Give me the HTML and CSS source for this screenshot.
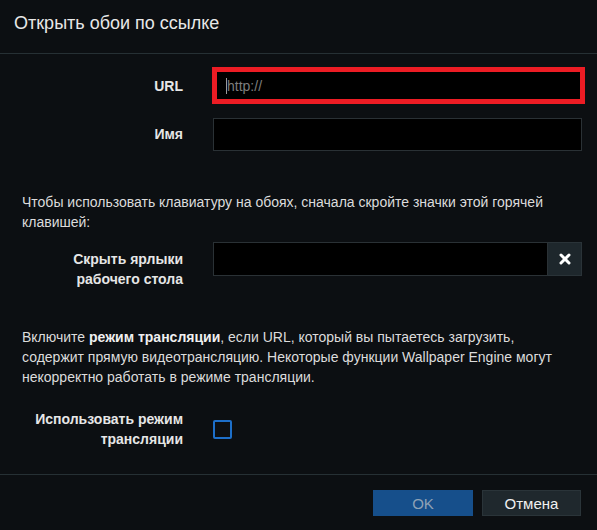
FILE: index.html
```html
<!DOCTYPE html>
<html lang="ru">
<head>
<meta charset="utf-8">
<title>Открыть обои по ссылке</title>
<link rel="stylesheet" href="styles.css">
</head>
<body>
<div class="dialog">
  <div class="header">Открыть обои по ссылке</div>
  <div class="body">
    <div class="row row-url">
      <label class="label">URL</label>
      <div class="input input-url"><span class="caret"></span><span class="placeholder">http://</span></div>
    </div>
    <div class="row row-name">
      <label class="label">Имя</label>
      <div class="input"></div>
    </div>
    <p class="text text-hotkey">Чтобы использовать клавиатуру на обоях, сначала скройте значки этой горячей клавишей:</p>
    <div class="row row-hotkey">
      <label class="label label-multi">Скрыть ярлыки<br>рабочего стола</label>
      <div class="hotkey">
        <div class="input hotkey-field"></div>
        <button class="clear" type="button" aria-label="Очистить">
          <svg width="12" height="12" viewBox="0 0 12 12"><path d="M2 2 L10 10 M10 2 L2 10" stroke="#ffffff" stroke-width="3" stroke-linecap="round"/></svg>
        </button>
      </div>
    </div>
    <p class="text text-stream">Включите <b>режим трансляции</b>, если URL, который вы пытаетесь загрузить, содержит прямую видеотрансляцию. Некоторые функции Wallpaper Engine могут некорректно работать в режиме трансляции.</p>
    <div class="row row-check">
      <label class="label label-multi">Использовать режим<br>трансляции</label>
      <span class="checkbox"></span>
    </div>
  </div>
  <div class="footer">
    <button class="btn btn-ok" type="button">OK</button>
    <button class="btn btn-cancel" type="button">Отмена</button>
  </div>
</div>
</body>
</html>
```
FILE: styles.css
```css
* { box-sizing: border-box; }
html, body {
  margin: 0;
  padding: 0;
  background: #0c0f12;
}
body {
  font-family: "Liberation Sans", Arial, sans-serif;
  font-size: 14px;
  color: #dcdcdc;
}
.dialog {
  width: 597px;
  height: 530px;
  display: flex;
  flex-direction: column;
}
.header {
  height: 54px;
  padding: 12px 0 0 14px;
  font-size: 18px;
  line-height: 22px;
  color: #e8e8e8;
  border-bottom: 1px solid #263034;
}
.body {
  flex: 1;
  padding: 13px 15px 0 22px;
}
.row {
  display: grid;
  grid-template-columns: 161px 1fr;
  column-gap: 30px;
  align-items: start;
}
.label {
  font-weight: bold;
  color: #e6e6e6;
  text-align: right;
  line-height: 20px;
}
.row-url .label { padding-top: 9px; }
.row-name { margin-top: 14px; }
.row-name .label { padding-top: 6px; }
.input {
  height: 33px;
  background: #000;
  border: 1px solid #2a3135;
}
.input-url {
  height: 37px;
  border: 5px solid #ec1c24;
  margin-left: -1px;
  margin-right: -3px;
  display: flex;
  align-items: center;
  padding-left: 9px;
}
.caret {
  width: 1px;
  height: 16px;
  background: #9a9a9a;
}
.placeholder {
  color: #7d7d7d;
  font-size: 14px;
}
.text {
  margin: 0;
  padding-right: 20px;
  line-height: 20px;
  color: #dcdcdc;
}
.text b { color: #f0f0f0; }
.text-hotkey { margin-top: 41px; }
.row-hotkey { margin-top: 10px; }
.row-hotkey .label { padding-top: 7px; }
.hotkey {
  display: flex;
  height: 34px;
}
.hotkey-field {
  flex: 1;
  height: 34px;
}
.clear {
  width: 34px;
  height: 34px;
  margin: 0;
  padding: 0;
  background: #1e272c;
  border: 1px solid #2a3338;
  border-left: none;
  display: flex;
  align-items: center;
  justify-content: center;
}
.text-stream { margin-top: 38px; }
.row-check {
  margin-top: 22px;
  align-items: center;
}
.checkbox {
  width: 19px;
  height: 19px;
  border: 2px solid #1d6fc9;
  border-radius: 2px;
}
.footer {
  height: 56px;
  border-top: 1px solid #263034;
  display: flex;
  justify-content: flex-end;
  align-items: flex-start;
  gap: 9px;
  padding: 15px 16px 0 0;
}
.btn {
  width: 100px;
  height: 26px;
  margin: 0;
  font-family: "Liberation Sans", Arial, sans-serif;
  font-size: 15px;
  border: 1px solid transparent;
  padding: 0;
}
.btn-ok {
  background: #164f8b;
  color: #8fa2b6;
}
.btn-cancel {
  width: 99px;
  background: #1f282d;
  border-color: #2a3439;
  color: #f0f0f0;
}
```
